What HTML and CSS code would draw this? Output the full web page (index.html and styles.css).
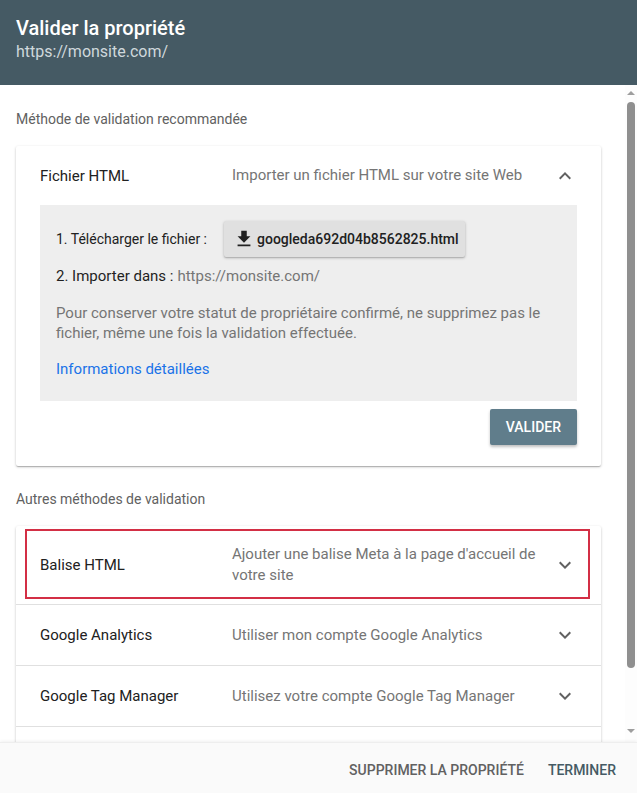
FILE: index.html
```html
<!DOCTYPE html>
<html lang="fr">
<head>
<meta charset="utf-8">
<title>Valider la propriété</title>
<link rel="stylesheet" href="styles.css">
</head>
<body>
<div class="dialog">
  <header class="dlg-head">
    <h1 class="dlg-title">Valider la propriété</h1>
    <div class="dlg-sub">https://monsite.com/</div>
  </header>

  <div class="dlg-body">
    <div class="content">
      <div class="section-label">Méthode de validation recommandée</div>

      <div class="card">
        <div class="row row-head">
          <div class="row-label">Fichier HTML</div>
          <div class="row-desc">Importer un fichier HTML sur votre site Web</div>
          <svg class="chev" viewBox="0 0 24 24" width="24" height="24"><path d="M7.41 15.41L12 10.83l4.59 4.58L18 14l-6-6-6 6z"/></svg>
        </div>
        <div class="panel">
          <div class="step step-dl">
            <span>1. Télécharger le fichier :</span>
            <button class="dl-btn">
              <svg class="dl-icon" viewBox="0 0 24 24" width="22" height="22"><path d="M19 9h-4V3H9v6H5l7 7 7-7zM5 18v2h14v-2H5z"/></svg>
              <span>googleda692d04b8562825.html</span>
            </button>
          </div>
          <div class="step step-up"><span class="step-label">2. Importer dans :</span> <span class="muted">https://monsite.com/</span></div>
          <p class="note">Pour conserver votre statut de propriétaire confirmé, ne supprimez pas le fichier, même une fois la validation effectuée.</p>
          <a class="more" href="#">Informations détaillées</a>
        </div>
        <div class="actions">
          <button class="validate">VALIDER</button>
        </div>
      </div>

      <div class="section-label second">Autres méthodes de validation</div>

      <div class="card list">
        <div class="row item highlighted">
          <div class="row-label">Balise HTML</div>
          <div class="row-desc">Ajouter une balise Meta à la page d'accueil de votre site</div>
          <svg class="chev" viewBox="0 0 24 24" width="24" height="24"><path d="M16.59 8.59L12 13.17 7.41 8.59 6 10l6 6 6-6z"/></svg>
        </div>
        <div class="row item">
          <div class="row-label">Google Analytics</div>
          <div class="row-desc">Utiliser mon compte Google Analytics</div>
          <svg class="chev" viewBox="0 0 24 24" width="24" height="24"><path d="M16.59 8.59L12 13.17 7.41 8.59 6 10l6 6 6-6z"/></svg>
        </div>
        <div class="row item">
          <div class="row-label">Google Tag Manager</div>
          <div class="row-desc">Utilisez votre compte Google Tag Manager</div>
          <svg class="chev" viewBox="0 0 24 24" width="24" height="24"><path d="M16.59 8.59L12 13.17 7.41 8.59 6 10l6 6 6-6z"/></svg>
        </div>
        <div class="row item item-empty"></div>
      </div>
    </div>

    <div class="scrollbar">
      <div class="sb-arrow sb-up"></div>
      <div class="sb-thumb"></div>
      <div class="sb-space"></div>
      <div class="sb-arrow sb-down"></div>
    </div>
  </div>

  <footer class="dlg-foot">
    <button class="text-btn delete">SUPPRIMER LA PROPRIÉTÉ</button>
    <button class="text-btn done">TERMINER</button>
  </footer>
</div>
</body>
</html>
```

FILE: styles.css
```css
* { box-sizing: border-box; }

html, body {
  margin: 0;
  padding: 0;
  height: 100%;
}

body {
  font-family: Roboto, "Noto Sans", "Liberation Sans", sans-serif;
  font-size: 14px;
  color: #212121;
  background: #fff;
}

.dialog {
  height: 793px;
  display: flex;
  flex-direction: column;
  overflow: hidden;
}

/* Header */
.dlg-head {
  height: 85px;
  flex: none;
  background: #455a64;
  padding: 17px 16px 0;
}

.dlg-title {
  margin: 0;
  font-size: 20px;
  line-height: 22px;
  font-weight: 500;
  color: #fff;
}

.dlg-sub {
  margin-top: 3px;
  font-size: 16px;
  line-height: 20px;
  color: #cfd8dc;
}

/* Body */
.dlg-body {
  flex: 1;
  display: flex;
  overflow: hidden;
  min-height: 0;
}

.content {
  flex: 1;
  padding: 24px 24px 0 16px;
  min-width: 0;
}

.section-label {
  font-size: 14px;
  line-height: 20px;
  color: #616161;
  margin-bottom: 17px;
}

.section-label.second {
  margin-top: 23px;
}

.card {
  background: #fff;
  border-radius: 2px;
  box-shadow: 0 1px 3px rgba(0,0,0,.2), 0 1px 1px rgba(0,0,0,.12), 0 2px 1px -1px rgba(0,0,0,.1);
}

.row {
  display: flex;
  align-items: center;
  padding: 0 24px;
  min-height: 59px;
}

.row-label {
  width: 192px;
  flex: none;
  font-size: 15px;
  line-height: 20px;
  color: #212121;
}

.row-desc {
  flex: 1;
  font-size: 15px;
  line-height: 21px;
  color: #757575;
  margin-right: 12px;
}

.chev {
  flex: none;
  fill: #616161;
}

/* Panel */
.panel {
  margin: 0 24px;
  background: #eeeeee;
  padding: 16px 16px 22px;
  color: #212121;
}

.step {
  display: flex;
  align-items: center;
  font-size: 14px;
  line-height: 20px;
}

.step-dl {
  gap: 17px;
}

.step-up {
  margin-top: 9px;
  gap: 4px;
  font-size: 15px;
}

.step-label {
  color: #1f1f1f;
}

.muted {
  color: #757575;
}

.dl-btn {
  display: flex;
  align-items: center;
  gap: 2px;
  height: 36px;
  padding: 0 6px 0 9px;
  border: none;
  border-radius: 2px;
  background: #e0e0e0;
  box-shadow: 0 1px 3px rgba(0,0,0,.25), 0 1px 1px rgba(0,0,0,.1);
  font-family: inherit;
  font-size: 14px;
  font-weight: 500;
  color: #212121;
}

.dl-icon {
  fill: #212121;
}

.note {
  margin: 17px 0 0;
  font-size: 15px;
  line-height: 20px;
  color: #757575;
}

.more {
  display: block;
  margin-top: 16px;
  font-size: 15px;
  line-height: 20px;
  color: #1a73e8;
  text-decoration: none;
}

.actions {
  display: flex;
  justify-content: flex-end;
  padding: 8px 24px 21px;
}

.validate {
  height: 36px;
  padding: 0 16px;
  border: none;
  border-radius: 2px;
  background: #607d8b;
  color: #fff;
  font-family: inherit;
  font-size: 14px;
  font-weight: 500;
  box-shadow: 0 2px 3px rgba(0,0,0,.25);
}

/* List card */
.item {
  padding-top: 18px;
  padding-bottom: 18px;
  border-bottom: 1px solid #e0e0e0;
}

.highlighted {
  position: relative;
}

.highlighted::after {
  content: "";
  position: absolute;
  top: 3px;
  left: 9px;
  right: 11px;
  bottom: 5px;
  border: 2px solid #d32f45;
  pointer-events: none;
}

/* Scrollbar */
.scrollbar {
  width: 12px;
  flex: none;
  display: flex;
  flex-direction: column;
  align-items: center;
  padding: 6px 0 9px;
  background: #fdfdfd;
}

.sb-arrow {
  width: 0;
  height: 0;
  border-left: 4px solid transparent;
  border-right: 4px solid transparent;
  flex: none;
}

.sb-up {
  border-bottom: 4px solid #9e9e9e;
}

.sb-down {
  border-top: 4px solid #9e9e9e;
}

.sb-thumb {
  margin-top: 7px;
  width: 8px;
  height: 566px;
  border-radius: 4px;
  background: #8f8f8f;
  flex: none;
}

.sb-space {
  flex: 1;
}

/* Footer */
.dlg-foot {
  height: 51px;
  flex: none;
  display: flex;
  align-items: center;
  justify-content: flex-end;
  gap: 8px;
  padding: 4px 13px 0 0;
  background: #fafafa;
  border-top: 1px solid #eeeeee;
  box-shadow: 0 -1px 3px rgba(0,0,0,.06);
  position: relative;
}

.text-btn {
  border: none;
  background: transparent;
  padding: 0 8px;
  height: 36px;
  font-family: inherit;
  font-size: 14px;
  font-weight: 500;
}

.delete {
  color: #616161;
}

.done {
  color: #455a64;
}
```
